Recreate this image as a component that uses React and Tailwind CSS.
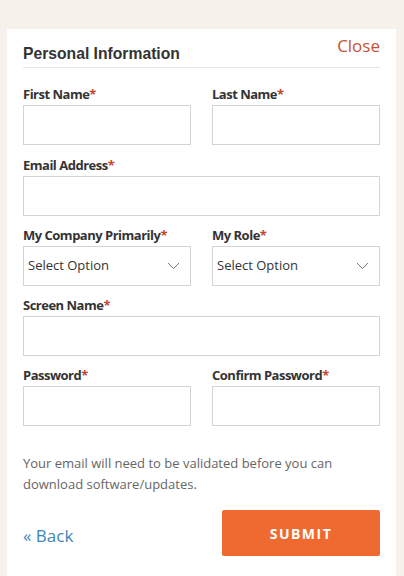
import React from "react";

const font = { fontFamily: "'Open Sans', 'Liberation Sans', sans-serif" };

function Label({ children }) {
  return (
    <div className="h-[18px] mb-[2px] text-[13px] leading-[18px] font-bold tracking-[-0.5px] text-[#333]">
      {children}
      <span className="text-[#c4462a]">*</span>
    </div>
  );
}

function Input() {
  return <div className="h-[40px] border border-[#d4d4d4] bg-white" />;
}

function Select() {
  return (
    <div className="h-[40px] border border-[#d4d4d4] bg-white flex items-center justify-between pl-[4px] pr-[10px]">
      <span className="text-[13px] text-[#333]">Select Option</span>
      <svg width="13" height="8" viewBox="0 0 13 8" fill="none">
        <path d="M1 1l5.5 5.5L12 1" stroke="#777" strokeWidth="1" />
      </svg>
    </div>
  );
}

export default function App() {
  return (
    <div className="min-h-[576px] bg-[#f6f1eb] pt-[29px] pl-[7px]" style={font}>
      <div className="w-[389px] min-h-[547px] bg-white px-4">
        <div className="pt-[7px] flex justify-between items-start border-b border-[#e6e6e6] pb-[4px]">
          <h2
            className="mt-[9px] text-[15.7px] leading-[18px] font-bold text-[#333]"
            style={{ fontFamily: "'Liberation Sans', Arial, sans-serif" }}
          >
            Personal Information
          </h2>
          <a className="text-[17px] leading-[20px] text-[#c4532f]">Close</a>
        </div>

        <div className="mt-[17px] grid grid-cols-2 gap-x-[21px] gap-y-[10px]">
          <div>
            <Label>First Name</Label>
            <Input />
          </div>
          <div>
            <Label>Last Name</Label>
            <Input />
          </div>
          <div className="col-span-2 mt-[1px]">
            <Label>Email Address</Label>
            <Input />
          </div>
          <div>
            <Label>My Company Primarily</Label>
            <Select />
          </div>
          <div>
            <Label>My Role</Label>
            <Select />
          </div>
          <div className="col-span-2">
            <Label>Screen Name</Label>
            <Input />
          </div>
          <div>
            <Label>Password</Label>
            <Input />
          </div>
          <div>
            <Label>Confirm Password</Label>
            <Input />
          </div>
        </div>

        <p className="mt-[27px] text-[13px] leading-[21px] text-[#666]">
          Your email will need to be validated before you can
          <br />
          download software/updates.
        </p>

        <div className="mt-[15px] flex justify-between items-center">
          <a className="mt-[6px] text-[17px] text-[#3d85b8]">« Back</a>
          <button className="w-[158px] h-[46px] rounded-[2px] bg-[#ee6a31] text-white text-[14px] font-bold tracking-[1.5px]">
            SUBMIT
          </button>
        </div>
      </div>
    </div>
  );
}
